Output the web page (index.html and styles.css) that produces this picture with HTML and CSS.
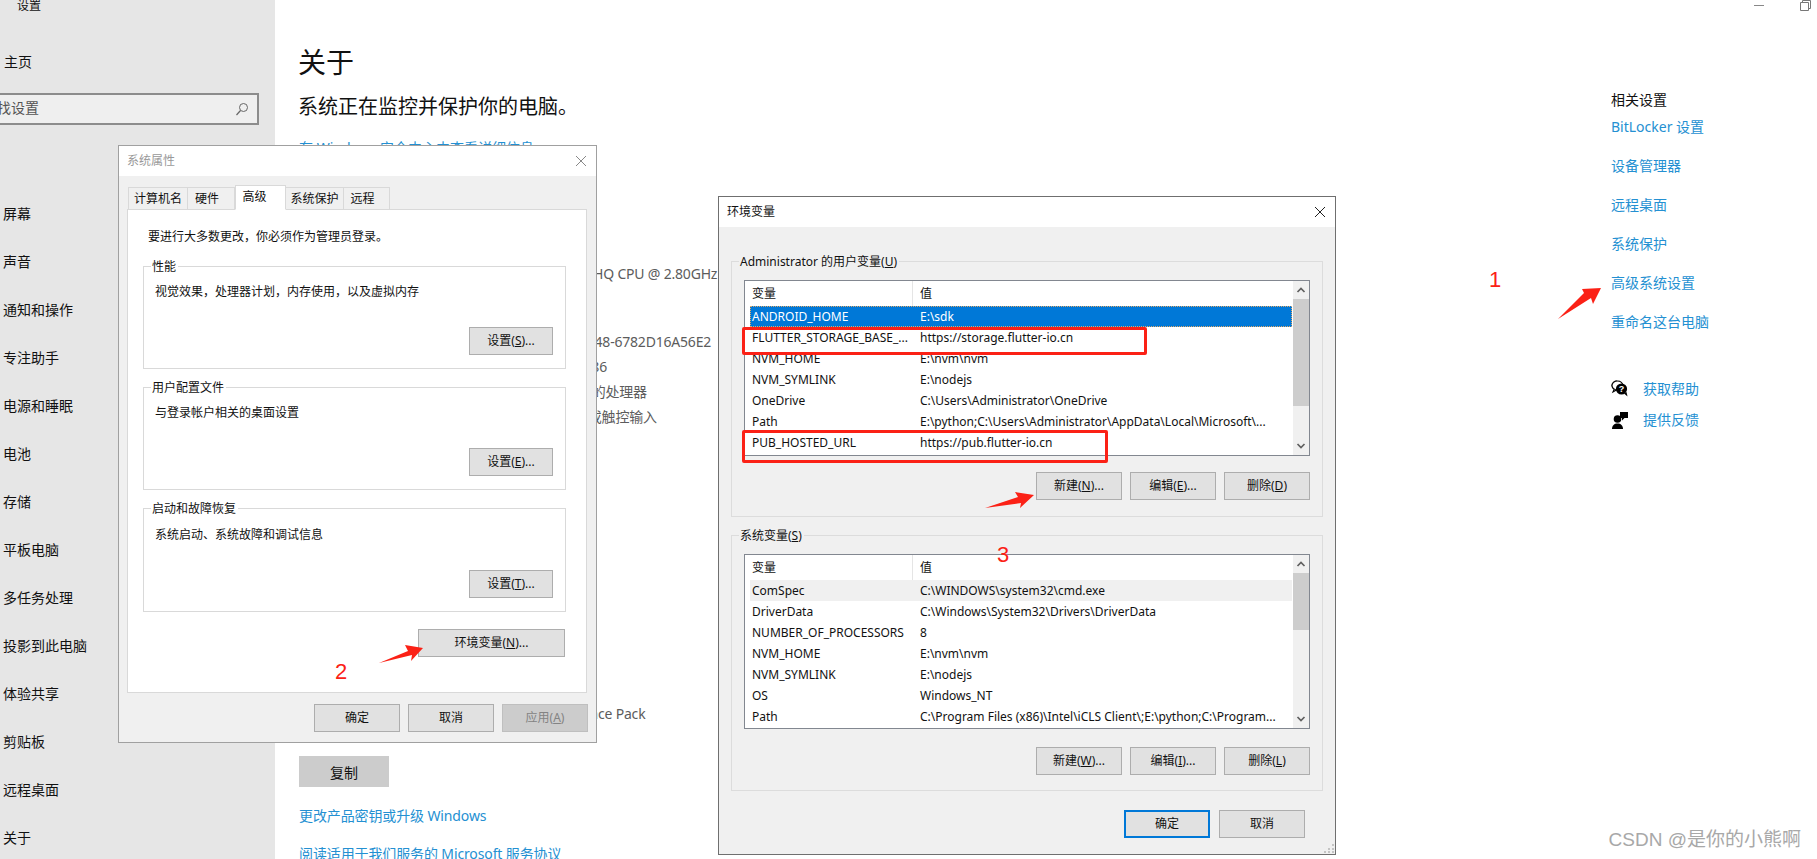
FILE: index.html
```html
<!DOCTYPE html>
<html lang="zh-CN">
<head>
<meta charset="utf-8">
<title>关于</title>
<link rel="stylesheet" href="styles.css">
</head>
<body>
<div class="screen">
  <aside class="sidebar">
    <div class="app-title">设置</div>
    <div class="home">主页</div>
    <div class="search">
      <span class="search-text">查找设置</span>
      <svg class="search-icon" width="14" height="14" viewBox="0 0 14 14"><circle cx="8.5" cy="5.5" r="4" fill="none" stroke="#666" stroke-width="1"/><path d="M5.5 8.5L1.5 13" stroke="#666" stroke-width="1.2" fill="none"/></svg>
    </div>
    <nav class="nav">
      <div class="nav-item">屏幕</div>
      <div class="nav-item">声音</div>
      <div class="nav-item">通知和操作</div>
      <div class="nav-item">专注助手</div>
      <div class="nav-item">电源和睡眠</div>
      <div class="nav-item">电池</div>
      <div class="nav-item">存储</div>
      <div class="nav-item">平板电脑</div>
      <div class="nav-item">多任务处理</div>
      <div class="nav-item">投影到此电脑</div>
      <div class="nav-item">体验共享</div>
      <div class="nav-item">剪贴板</div>
      <div class="nav-item">远程桌面</div>
      <div class="nav-item">关于</div>
    </nav>
  </aside>

  <main class="content">
    <h1 class="page-title">关于</h1>
    <p class="status">系统正在监控并保护你的电脑。</p>
    <a class="link link-security">在 Windows 安全中心中查看详细信息</a>
    <div class="spec spec-cpu">
      <div class="spec-row">Intel(R) Core(TM) i7-7700HQ CPU @ 2.80GHz</div>
    </div>
    <div class="spec spec-ids">
      <div class="spec-row">3F2C81D0-5B7E-4A10-9A48-6782D16A56E2</div>
      <div class="spec-row">00330-80000-00000-AA786</div>
      <div class="spec-row">64位操作系统，基于 x64 的处理器</div>
      <div class="spec-row">没有可用于此显示器的笔或触控输入</div>
    </div>
    <div class="spec spec-pack">
      <div class="spec-row">Windows Feature Experience Pack</div>
    </div>
    <button class="copy">复制</button>
    <a class="link link-key">更改产品密钥或升级 Windows</a>
    <a class="link link-terms">阅读适用于我们服务的 Microsoft 服务协议</a>
  </main>

  <aside class="related">
    <div class="related-title">相关设置</div>
    <a class="link related-link">BitLocker 设置</a>
    <a class="link related-link">设备管理器</a>
    <a class="link related-link">远程桌面</a>
    <a class="link related-link">系统保护</a>
    <a class="link related-link">高级系统设置</a>
    <a class="link related-link">重命名这台电脑</a>
    <div class="help-row help-first">
      <svg width="18" height="18" viewBox="0 0 18 18"><path d="M6 1C3 1 1 3 1 5.5c0 1.700.9 3 2.200 3.800L2 12l3.400-2" fill="#fff" stroke="#000" stroke-width="1.100"/><ellipse cx="6.500" cy="5.500" rx="5.500" ry="4.500" fill="#fff" stroke="#000" stroke-width="1.100"/><circle cx="10.500" cy="9" r="5.600" fill="#000"/><path d="M13 13.500l3.500 3-1-4.500z" fill="#000"/><text class="help-mark" x="10.500" y="12.300" text-anchor="middle">?</text></svg>
      <a class="link">获取帮助</a>
    </div>
    <div class="help-row help-second">
      <svg width="18" height="18" viewBox="0 0 18 18"><circle cx="6.500" cy="8" r="3.800" fill="#000"/><path d="M1 18c0-3.500 2.300-5.500 5.500-5.500S12 14.500 12 18z" fill="#000"/><path d="M9 1h8v6h-3.500L11 9.500V7H9z" fill="#000"/></svg>
      <a class="link">提供反馈</a>
    </div>
  </aside>

  <div class="win-controls">
    <span class="win-min"></span>
    <svg width="11" height="11" viewBox="0 0 11 11"><path d="M2.500 2.500V.5h8v8h-2M.5 2.500h8v8h-8z" fill="#fff" stroke="#777" stroke-width="1"/></svg>
  </div>

  <section class="dialog dialog-props">
    <header class="dialog-bar bar-inactive">
      <span>系统属性</span>
      <svg class="close" width="12" height="12" viewBox="0 0 12 12"><path d="M1 1l10 10M11 1L1 11" stroke="#888" stroke-width="1" fill="none"/></svg>
    </header>
    <div class="props-body">
      <div class="tabs">
        <div class="tab tab-a">计算机名</div>
        <div class="tab tab-b">硬件</div>
        <div class="tab tab-active">高级</div>
        <div class="tab tab-c">系统保护</div>
        <div class="tab tab-d">远程</div>
      </div>
      <div class="panel">
        <p class="panel-note">要进行大多数更改，你必须作为管理员登录。</p>
        <div class="group group-perf">
          <span class="legend">性能</span>
          <p class="group-text">视觉效果，处理器计划，内存使用，以及虚拟内存</p>
          <button class="btn btn-end">设置(<u>S</u>)...</button>
        </div>
        <div class="group group-profile">
          <span class="legend">用户配置文件</span>
          <p class="group-text">与登录帐户相关的桌面设置</p>
          <button class="btn btn-end">设置(<u>E</u>)...</button>
        </div>
        <div class="group group-boot">
          <span class="legend">启动和故障恢复</span>
          <p class="group-text">系统启动、系统故障和调试信息</p>
          <button class="btn btn-end">设置(<u>T</u>)...</button>
        </div>
        <div class="env-wrap"><button class="btn btn-env">环境变量(<u>N</u>)...</button></div>
      </div>
      <div class="actions actions-props">
        <button class="btn">确定</button>
        <button class="btn">取消</button>
        <button class="btn btn-disabled">应用(<u>A</u>)</button>
      </div>
    </div>
  </section>

  <section class="dialog dialog-env">
    <header class="dialog-bar">
      <span>环境变量</span>
      <svg class="close" width="12" height="12" viewBox="0 0 12 12"><path d="M1 1l10 10M11 1L1 11" stroke="#222" stroke-width="1" fill="none"/></svg>
    </header>
    <div class="env-body">
      <div class="var-group">
        <span class="legend">Administrator 的用户变量(<u>U</u>)</span>
        <div class="list list-user">
          <div class="list-main">
            <div class="list-head"><span class="col-name">变量</span><span class="col-value">值</span></div>
            <div class="list-row row-selected"><span class="col-name">ANDROID_HOME</span><span class="col-value">E:\sdk</span></div>
            <div class="list-row"><span class="col-name">FLUTTER_STORAGE_BASE_...</span><span class="col-value">https://storage.flutter-io.cn</span></div>
            <div class="list-row"><span class="col-name">NVM_HOME</span><span class="col-value">E:\nvm\nvm</span></div>
            <div class="list-row"><span class="col-name">NVM_SYMLINK</span><span class="col-value">E:\nodejs</span></div>
            <div class="list-row"><span class="col-name">OneDrive</span><span class="col-value">C:\Users\Administrator\OneDrive</span></div>
            <div class="list-row"><span class="col-name">Path</span><span class="col-value">E:\python;C:\Users\Administrator\AppData\Local\Microsoft\...</span></div>
            <div class="list-row"><span class="col-name">PUB_HOSTED_URL</span><span class="col-value">https://pub.flutter-io.cn</span></div>
          </div>
          <div class="scrollbar">
            <svg class="sb-arrow" width="16" height="18" viewBox="0 0 16 18"><path d="M4.500 11L8 7.500 11.500 11" fill="none" stroke="#606060" stroke-width="1.700"/></svg>
            <div class="sb-track"><div class="sb-thumb thumb-user"></div></div>
            <svg class="sb-arrow" width="16" height="18" viewBox="0 0 16 18"><path d="M4.500 7L8 10.500 11.500 7" fill="none" stroke="#606060" stroke-width="1.700"/></svg>
          </div>
        </div>
        <div class="actions actions-vars">
          <button class="btn">新建(<u>N</u>)...</button>
          <button class="btn">编辑(<u>E</u>)...</button>
          <button class="btn">删除(<u>D</u>)</button>
        </div>
      </div>
      <div class="var-group var-group-sys">
        <span class="legend">系统变量(<u>S</u>)</span>
        <div class="list list-sys">
          <div class="list-main">
            <div class="list-head"><span class="col-name">变量</span><span class="col-value">值</span></div>
            <div class="list-row row-hover"><span class="col-name">ComSpec</span><span class="col-value">C:\WINDOWS\system32\cmd.exe</span></div>
            <div class="list-row"><span class="col-name">DriverData</span><span class="col-value">C:\Windows\System32\Drivers\DriverData</span></div>
            <div class="list-row"><span class="col-name">NUMBER_OF_PROCESSORS</span><span class="col-value">8</span></div>
            <div class="list-row"><span class="col-name">NVM_HOME</span><span class="col-value">E:\nvm\nvm</span></div>
            <div class="list-row"><span class="col-name">NVM_SYMLINK</span><span class="col-value">E:\nodejs</span></div>
            <div class="list-row"><span class="col-name">OS</span><span class="col-value">Windows_NT</span></div>
            <div class="list-row"><span class="col-name">Path</span><span class="col-value">C:\Program Files (x86)\Intel\iCLS Client\;E:\python;C:\Program...</span></div>
          </div>
          <div class="scrollbar">
            <svg class="sb-arrow" width="16" height="18" viewBox="0 0 16 18"><path d="M4.500 11L8 7.500 11.500 11" fill="none" stroke="#606060" stroke-width="1.700"/></svg>
            <div class="sb-track"><div class="sb-thumb thumb-sys"></div></div>
            <svg class="sb-arrow" width="16" height="18" viewBox="0 0 16 18"><path d="M4.500 7L8 10.500 11.500 7" fill="none" stroke="#606060" stroke-width="1.700"/></svg>
          </div>
        </div>
        <div class="actions actions-vars actions-sys">
          <button class="btn">新建(<u>W</u>)...</button>
          <button class="btn">编辑(<u>I</u>)...</button>
          <button class="btn">删除(<u>L</u>)</button>
        </div>
      </div>
      <div class="actions actions-env">
        <button class="btn btn-default">确定</button>
        <button class="btn">取消</button>
      </div>
    </div>
    <svg class="grip" width="11" height="10" viewBox="0 0 11 10"><path d="M8 1h2v2H8zM4 5h2v2H4zM8 5h2v2H8zM0 8h2v2H0zM4 8h2v2H4zM8 8h2v2H8z" fill="#c4c4c4"/></svg>
  </section>

  <div class="mark-box mark-box-a"></div>
  <div class="mark-box mark-box-b"></div>
  <svg class="arrows" width="1817" height="859" viewBox="0 0 1817 859">
    <path d="M1558 319L1584 293L1582 289L1601 288L1593 304L1591 298Z" fill="#fb2116"/>
    <path d="M379 663L408 651L405 645L423 648L411 661L412 655Z" fill="#fb2116"/>
    <path d="M985 508L1018 497L1015 492L1034 495L1020 508L1021 503Z" fill="#fb2116"/>
  </svg>
  <span class="mark-num num-1">1</span>
  <span class="mark-num num-2">2</span>
  <span class="mark-num num-3">3</span>
  <span class="watermark">CSDN @是你的小熊啊</span>
</div>
</body>
</html>
```
FILE: styles.css
```css
* { box-sizing: border-box; }
html, body { margin: 0; padding: 0; }
body {
  width: 1817px;
  height: 859px;
  overflow: hidden;
  background: #fff;
  font-family: "Noto Sans", "Noto Sans CJK SC", sans-serif;
  color: #111;
}
p, h1 { margin: 0; font-weight: 400; }
button { font-family: inherit; }
.screen {
  position: relative;
  display: flex;
  width: 1817px;
  height: 859px;
  overflow: hidden;
  font-size: 14px;
}

/* Sidebar */
.sidebar {
  flex: 0 0 275px;
  height: 859px;
  background: #e6e6e6;
  overflow: hidden;
}
.app-title {
  margin-top: -4px;
  padding-left: 17px;
  line-height: 20px;
  font-size: 12px;
}
.home {
  margin-top: 36px;
  padding-left: 4px;
  line-height: 20px;
}
.search {
  display: flex;
  align-items: center;
  justify-content: space-between;
  width: 284px;
  height: 32px;
  margin: 21px 0 0 -25px;
  padding: 0 8px 0 6px;
  background: #efefef;
  border: 2px solid #8c8c8c;
  color: #555;
}
.search-text { line-height: 18px; margin-top: -2px; }
.nav { margin-top: 65px; }
.nav-item {
  height: 48px;
  padding-left: 3px;
  line-height: 48px;
}

/* Main column */
.content {
  flex: 1 1 auto;
  padding-left: 24px;
  min-width: 0;
}
.page-title {
  margin: 42px 0 0 -1px;
  font-size: 28px;
  line-height: 40px;
}
.status {
  margin: 11px 0 0 -1px;
  font-size: 20px;
  line-height: 28px;
}
.link {
  display: block;
  color: #2490d2;
  line-height: 22px;
  white-space: nowrap;
}
.link-security { margin-top: 16px; }
.spec { color: #5c5c5c; padding-left: 137px; letter-spacing: -0.2px; }
.spec-row { line-height: 25px; white-space: nowrap; }
.spec-cpu { margin-top: 102px; }
.spec-ids { margin-top: 43px; }
.spec-pack { margin-top: 272px; padding-left: 129px; letter-spacing: -0.2px; }
.copy {
  display: block;
  width: 90px;
  height: 31px;
  margin-top: 30px;
  padding: 0;
  background: #ccc;
  border: 0;
  font-size: 14px;
  color: #111;
}
.link-key { margin-top: 18px; letter-spacing: -0.12px; }
.link-terms { margin-top: 16px; letter-spacing: -0.12px; }

/* Related column */
.related {
  flex: 0 0 206px;
  padding-top: 90px;
}
.related-title { line-height: 20px; }
.related-link { line-height: 20px; margin-top: 19px; }
.related-title + .related-link { margin-top: 7px; }
.help-row {
  display: flex;
  align-items: center;
  gap: 14px;
  height: 20px;
}
.help-row .link { line-height: 20px; }
.help-first { margin-top: 47px; }
.help-second { margin-top: 11px; }
.help-mark { font-size: 9px; font-weight: 700; fill: #fff; font-family: "Liberation Sans", sans-serif; }
.win-controls {
  position: absolute;
  top: 0;
  right: 6px;
  display: flex;
  align-items: flex-start;
  gap: 36px;
}
.win-min { display: block; width: 10px; height: 1px; margin-top: 5px; background: #888; }

/* Dialogs */
.dialog {
  position: absolute;
  background: #f0f0f0;
  font-size: 12px;
  line-height: 16px;
}
.dialog-props {
  left: 118px;
  top: 145px;
  width: 479px;
  height: 598px;
  border: 1px solid #a0a0a0;
}
.dialog-env {
  left: 718px;
  top: 196px;
  width: 618px;
  height: 659px;
  border: 1px solid #6f6f6f;
}
.dialog-bar {
  display: flex;
  align-items: center;
  justify-content: space-between;
  height: 30px;
  padding: 0 9px 0 8px;
  background: #fff;
  color: #111;
}
.bar-inactive { color: #999; }
.close { display: block; }

/* System properties */
.props-body { padding: 9px 9px 0 8px; }
.tabs {
  display: flex;
  align-items: flex-end;
  margin: 0 0 -1px 1px;
  position: relative;
}
.tab {
  height: 23px;
  background: #f0f0f0;
  border: 1px solid #d9d9d9;
  border-left: 0;
  border-bottom-color: #d9d9d9;
  line-height: 21px;
  text-align: center;
}
.tab-a { width: 60px; border-left: 1px solid #d9d9d9; }
.tab-b { width: 47px; padding-right: 8px; }
.tab-active {
  width: 51px;
  height: 25px;
  padding-right: 12px;
  background: #fff;
  border-left: 1px solid #d9d9d9;
  border-bottom-color: #fff;
  line-height: 21px;
}
.tab-c { width: 58px; }
.tab-d { width: 46px; padding-right: 8px; }
.panel {
  height: 484px;
  padding: 17px 0 0 15px;
  background: #fff;
  border: 1px solid #d9d9d9;
}
.panel-note { padding-left: 5px; line-height: 20px; }
.group {
  position: relative;
  display: flex;
  flex-direction: column;
  width: 423px;
  padding: 15px 12px 13px 11px;
  border: 1px solid #d9d9d9;
}
.group-perf { height: 103px; margin-top: 19px; }
.group-profile { height: 103px; margin-top: 18px; }
.group-boot { height: 104px; margin-top: 18px; }
.group-text { line-height: 20px; }
.group-boot .group-text { margin-top: 1px; }
.legend {
  position: absolute;
  top: -8px;
  left: 7px;
  padding: 0 2px 0 1px;
  background: #fff;
  line-height: 16px;
  white-space: nowrap;
}
.btn {
  display: block;
  width: 86px;
  height: 28px;
  padding: 0;
  background: #e1e1e1;
  border: 1px solid #adadad;
  border-radius: 0;
  font-size: 12px;
  line-height: 16px;
  color: #111;
  white-space: nowrap;
}
.btn u { text-underline-offset: 1px; }
.btn-end { width: 84px; margin-top: auto; align-self: flex-end; }
.env-wrap { width: 422px; margin-top: 17px; display: flex; justify-content: flex-end; }
.btn-env { width: 147px; }
.btn-disabled { background: #ccc; border-color: #bfbfbf; color: #838383; }
.btn-default { border: 2px solid #0078d7; }
.actions { display: flex; justify-content: flex-end; gap: 8px; }
.actions-props { margin: 11px -1px 0 0; }

/* Environment variables */
.env-body { padding: 34px 12px 0 12px; }
.var-group {
  position: relative;
  padding: 18px 12px 16px 12px;
  background: transparent;
  border: 1px solid #dcdcdc;
  height: 256px;
}
.var-group .legend { background: #f0f0f0; }
.var-group-sys { margin-top: 18px; }
.list {
  display: flex;
  width: 566px;
  background: #fff;
  border: 1px solid #828790;
}
.list-user { height: 176px; }
.list-sys { height: 175px; margin-top: 0; }
.list-main { flex: 1 1 auto; padding-left: 5px; min-width: 0; overflow: hidden; }
.list-head {
  display: grid;
  grid-template-columns: 163px 1fr;
  height: 25px;
  line-height: 26px;
}
.list-head .col-name { padding-left: 2px; border-right: 1px solid #e5e5e5; }
.list-row {
  display: grid;
  grid-template-columns: 163px 1fr;
  height: 21px;
  line-height: 21px;
  white-space: nowrap;
}
.col-name { padding-left: 2px; overflow: hidden; }
.col-value { padding-left: 7px; overflow: hidden; }
.row-selected {
  background: #0078d7;
  color: #fff;
  outline: 1px dotted #e0a868;
  outline-offset: -1px;
}
.row-hover { background: #f0f0f0; }
.scrollbar {
  display: flex;
  flex-direction: column;
  flex: 0 0 16px;
  background: #f0f0f0;
  margin-left: 1px;
}
.sb-arrow { display: block; flex: 0 0 18px; }
.sb-track { flex: 1 1 auto; }
.sb-thumb { background: #cdcdcd; }
.thumb-user { height: 107px; }
.thumb-sys { height: 57px; }
.actions-vars { margin-top: 16px; }
.actions-sys { margin-top: 18px; }
.actions-env { margin-top: 19px; padding-right: 18px; gap: 9px; }
.grip { position: absolute; right: 0; bottom: 1px; }

/* Annotations */
.mark-box {
  position: absolute;
  border: 3px solid #fb2116;
  border-radius: 2px;
}
.mark-box-a { left: 742px; top: 327px; width: 405px; height: 28px; }
.mark-box-b { left: 742px; top: 430px; width: 366px; height: 33px; }
.arrows { position: absolute; left: 0; top: 0; pointer-events: none; }
.mark-num {
  position: absolute;
  font-family: "Liberation Sans", sans-serif;
  font-size: 22px;
  line-height: 24px;
  color: #fb2116;
}
.num-1 { left: 1489px; top: 268px; }
.num-2 { left: 335px; top: 660px; }
.num-3 { left: 997px; top: 543px; }
.watermark {
  position: absolute;
  right: 16px;
  top: 828px;
  font-family: "Liberation Sans", "Noto Sans CJK SC", sans-serif;
  font-size: 19px;
  line-height: 24px;
  color: #a8a8a8;
}
```
